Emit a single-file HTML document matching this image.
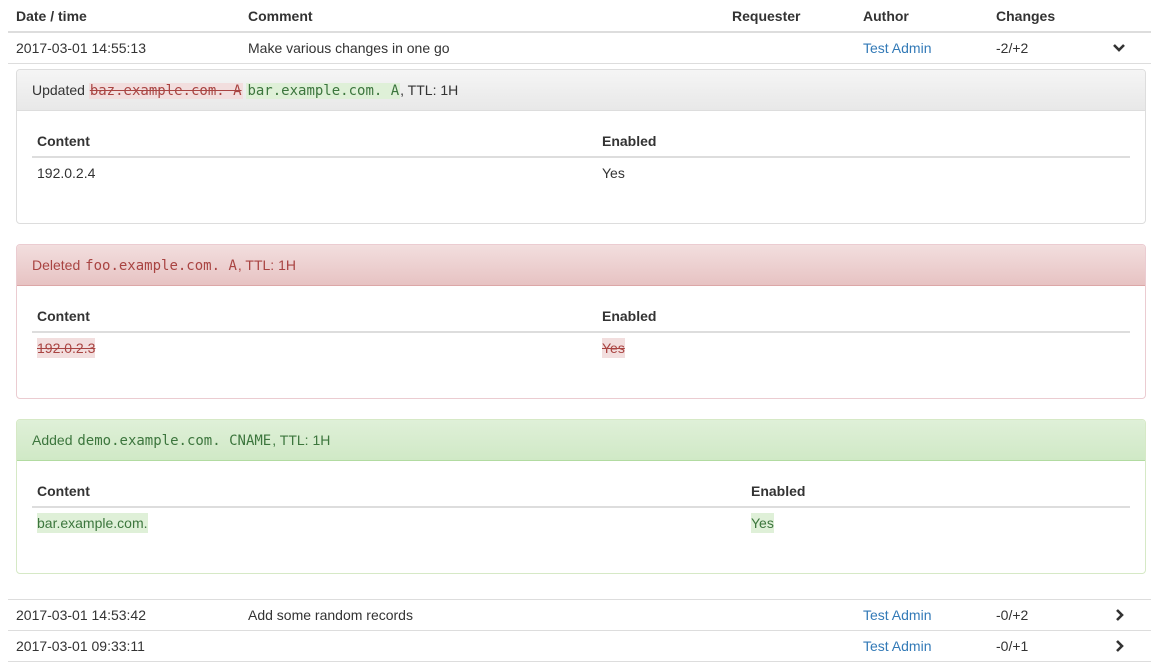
<!DOCTYPE html>
<html><head><meta charset="utf-8"><style>
*{box-sizing:border-box}
body{margin:0;font-family:"Liberation Sans",sans-serif;font-size:14px;color:#333;background:#fff;line-height:20px}
.main{position:absolute;left:8px;width:1143px;top:0}
.row{position:relative;height:31px;border-bottom:1px solid #ddd}
.row span{position:absolute;top:5px}
.hdr{height:33px;border-bottom:2px solid #ddd;font-weight:bold}
.hdr span{top:6px}
.c1{left:8px}.c2{left:240px}.c3{left:724px}.c4{left:855px}.c5{left:988px}.c6{left:1104px;top:6px!important}
a{color:#337ab7;text-decoration:none}
.panel{position:absolute;left:16px;width:1130px;border:1px solid #ddd;border-radius:4px;background:#fff;overflow:hidden}
.ph{height:41px;padding:10px 15px;border-bottom:1px solid #ddd;background:linear-gradient(#f5f5f5,#e8e8e8)}
.pd .ph{background:linear-gradient(#f2dede,#e7c3c3);color:#a94442;border-color:#dca7a7}
.pd{border-color:#ebccd1}
.ps .ph{background:linear-gradient(#dff0d8,#d0e9c6);color:#3c763d;border-color:#b2dba1}
.ps{border-color:#d6e9c6}
code{font-family:"DejaVu Sans Mono",monospace;font-size:14px;padding:0 1px}
.del{background:#f2dede;color:#a94442;text-decoration:line-through}
.ins{background:#dff0d8;color:#3c763d}
.pb{padding:10px 15px 0 15px;position:relative;height:112px}
.t{position:relative;width:1098px}
.th{height:37px;border-bottom:2px solid #ddd;font-weight:bold;position:relative}
.th span{position:absolute;top:10px}
.tr span{position:absolute;top:5px}
.tr{height:37px;position:relative}
</style></head><body>
<div class="main">
<div class="row hdr"><span class="c1">Date / time</span><span class="c2">Comment</span><span class="c3">Requester</span><span class="c4">Author</span><span class="c5">Changes</span></div>
<div class="row"><span class="c1">2017-03-01 14:55:13</span><span class="c2">Make various changes in one go</span><span class="c4"><a>Test Admin</a></span><span class="c5">-2/+2</span><span class="c6"><svg width="14" height="12" viewBox="0 0 14 12"><path d="M2 3l5 5 5-5" fill="none" stroke="#333" stroke-width="2.6"/></svg></span></div>
</div>

<div class="panel" style="top:69px;height:155px">
<div class="ph">Updated <code class="del">baz.example.com. A</code> <code class="ins">bar.example.com. A</code>, TTL: 1H</div>
<div class="pb"><div class="t"><div class="th"><span style="left:5px">Content</span><span style="left:570px">Enabled</span></div>
<div class="tr"><span style="left:5px">192.0.2.4</span><span style="left:570px">Yes</span></div></div></div></div>

<div class="panel pd" style="top:244px;height:155px">
<div class="ph">Deleted <code>foo.example.com. A</code>, TTL: 1H</div>
<div class="pb"><div class="t"><div class="th"><span style="left:5px">Content</span><span style="left:570px">Enabled</span></div>
<div class="tr"><span style="left:5px" class="del">192.0.2.3</span><span style="left:570px" class="del">Yes</span></div></div></div></div>

<div class="panel ps" style="top:419px;height:155px">
<div class="ph">Added <code>demo.example.com. CNAME</code>, TTL: 1H</div>
<div class="pb"><div class="t"><div class="th"><span style="left:5px">Content</span><span style="left:719px">Enabled</span></div>
<div class="tr"><span style="left:5px" class="ins">bar.example.com.</span><span style="left:719px" class="ins">Yes</span></div></div></div></div>

<div class="main" style="top:599px;border-top:1px solid #ddd">
<div class="row"><span class="c1">2017-03-01 14:53:42</span><span class="c2">Add some random records</span><span class="c4"><a>Test Admin</a></span><span class="c5">-0/+2</span><span class="c6"><svg width="14" height="12" viewBox="0 0 14 12"><path d="M5 1l5 5-5 5" fill="none" stroke="#333" stroke-width="2.6"/></svg></span></div>
<div class="row"><span class="c1">2017-03-01 09:33:11</span><span class="c4"><a>Test Admin</a></span><span class="c5">-0/+1</span><span class="c6"><svg width="14" height="12" viewBox="0 0 14 12"><path d="M5 1l5 5-5 5" fill="none" stroke="#333" stroke-width="2.6"/></svg></span></div>
</div>
</body></html>
